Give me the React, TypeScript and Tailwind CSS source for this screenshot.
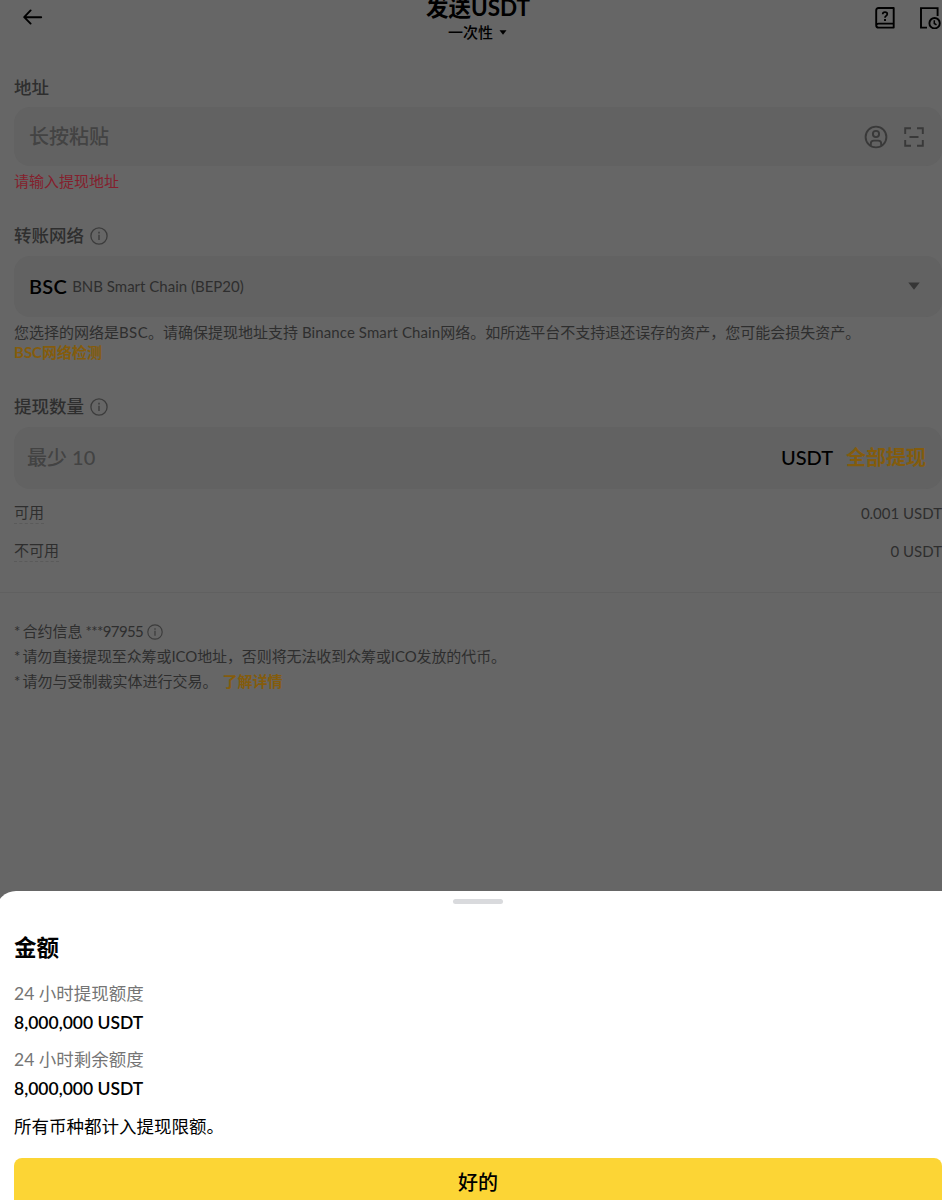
import type { ReactNode } from "react";

const InfoIcon = ({ className = "" }: { className?: string }) => (
  <svg viewBox="0 0 18 18" fill="none" stroke="#3c3c3c" className={className}>
    <circle cx="9" cy="9" r="8.1" strokeWidth="1.3" />
    <path d="M9 7.7v5.4" strokeWidth="1.4" />
    <path d="M9 4.8v1.6" strokeWidth="1.5" />
  </svg>
);

const Label = ({ children }: { children: ReactNode }) => (
  <div className="flex h-5 items-center gap-1.5 text-[17.5px] leading-5 font-medium text-[#2e2e2e]">
    {children}
  </div>
);

const Header = () => (
  <header className="grid h-[60px] grid-cols-3 items-start">
    <svg viewBox="0 0 20 16" fill="none" stroke="#000" strokeWidth="1.9" strokeLinecap="round" strokeLinejoin="round" className="mt-[9px] ml-[23px] h-4 w-5">
      <path d="M18.2 8.2H1.5M7.6 1.4 1.2 8.2l6.4 6.4" />
    </svg>

    <div className="-mt-[9px] ml-[14px] flex flex-col items-center">
      <h1 className="h-[33px] text-[22.5px] leading-[33px] font-bold whitespace-nowrap text-black">
        发送USDT
      </h1>
      <button className="-ml-px flex h-4 items-center gap-1.5 text-[15px] leading-4 font-medium text-black">
        <span>一次性</span>
        <svg viewBox="0 0 8 5" className="h-[5px] w-2">
          <path d="M.5.3h7L4 4.7z" />
        </svg>
      </button>
    </div>

    <div className="mt-[7px] flex justify-end gap-6">
      {/* help book */}
      <svg viewBox="0 0 20 22" fill="none" stroke="#000" strokeWidth="1.9" className="h-[22px] w-5">
        <path d="M18.7 1H3.6Q1.2 1 1.2 3.4v14.8Q1.2 20.6 3.6 20.6h15.1zM1.4 18.2Q1.6 16.6 3.6 16.6h15" strokeLinejoin="round" />
        <path d="M7.7 7.2q0-2.1 2.3-2.1t2.3 2q0 1.2-1.3 1.8-1 .5-1 1.8" strokeWidth="1.7" />
        <path d="M10 12v1.9" />
      </svg>
      {/* history */}
      <svg viewBox="0 0 23 22" fill="none" stroke="#000" strokeWidth="1.9" className="h-[22px] w-[23px]">
        <path d="M8 20.6H2V1.1h16.6v8" />
        <circle cx="15.6" cy="16.2" r="5.2" />
        <path d="M15.3 13.3v3.2l2.2 1.4" strokeWidth="1.5" />
      </svg>
    </div>
  </header>
);

const AmountRow = ({ label, value }: { label: string; value: string }) => (
  <div className="flex h-[21px] items-start justify-between text-[15px] leading-[18px]">
    <span className="h-[21px] border-b border-dashed border-[#5a5a5a]">{label}</span>
    <span className="pt-px">{value}</span>
  </div>
);

const LimitItem = ({ label, value }: { label: string; value: string }) => (
  <div className="text-[17.5px]">
    <p className="h-[29px] leading-[27px] text-[#757575]">{label}</p>
    <p className="h-[29px] leading-[27px] font-semibold text-black">{value}</p>
  </div>
);

const WithdrawForm = () => (
  <main className="pt-[18px] text-[#2e2e2e]">
    <div className="ml-3.5">
      <Label>地址</Label>
      <div className="mt-[9px] flex h-[59px] items-center justify-between rounded-2xl bg-[#626262] pr-[18px] pl-[15px]">
        <span className="pb-0.5 text-[20px] font-medium text-[#434343]">长按粘贴</span>
        <div className="flex items-center gap-4">
          <svg viewBox="0 0 24 24" fill="none" stroke="#393939" strokeWidth="1.9" className="size-6">
            <circle cx="12" cy="12" r="10.4" />
            <circle cx="12" cy="9" r="3.1" />
            <path d="M6.8 20.2v-1.5q0-3.1 3.1-3.1h4.2q3.1 0 3.1 3.1v1.5" />
          </svg>
          <svg viewBox="0 0 20 20" fill="none" stroke="#393939" strokeWidth="1.9" className="size-5">
            <path d="M1.2 7V1.2H7M13 1.2h5.8V7M18.8 13v5.8H13M7 18.8H1.2V13M5.5 10h9" />
          </svg>
        </div>
      </div>
      <p className="mt-1.5 h-5 text-[15px] leading-[18px] text-[#841f2d]">请输入提现地址</p>

      <div className="mt-[34px] mb-2.5">
        <Label>
          转账网络
          <InfoIcon className="size-[18px]" />
        </Label>
      </div>
      <div className="flex h-[61px] items-center rounded-2xl bg-[#626262] pr-[22px] pb-px pl-[15px]">
        <span className="text-[20px] font-semibold tracking-[0.3px] text-black">BSC</span>
        <span className="ml-[5px] text-[15px]">BNB Smart Chain (BEP20)</span>
        <svg viewBox="0 0 12 8" fill="#363636" className="ml-auto h-2 w-3">
          <path d="M.3.5h11.4L6 7.7z" />
        </svg>
      </div>
      <p className="mt-[5px] text-[15px] leading-5 whitespace-nowrap">
        您选择的网络是<span className="tracking-[0.4px]">BSC</span>。请确保提现地址支持{" "}
        <span className="tracking-[0.1px]">Binance Smart Chain</span>网络。如所选平台不支持退还误存的资产，您可能会损失资产。
        <br />
        <a className="font-bold text-[#845c0c]">BSC网络检测</a>
      </p>

      <div className="mt-[35px] mb-2.5">
        <Label>
          提现数量
          <InfoIcon className="size-[18px]" />
        </Label>
      </div>
      <div className="flex h-[62px] items-center rounded-2xl bg-[#626262] pr-4 pb-0.5 pl-[13px] text-[20px] font-medium">
        <span className="text-[#434343]">最少 10</span>
        <span className="ml-auto text-black">USDT</span>
        <button className="ml-[13px] font-semibold text-[#845c0c]">全部提现</button>
      </div>

      <div className="mt-3.5 flex flex-col gap-[17px]">
        <AmountRow label="可用" value="0.001 USDT" />
        <AmountRow label="不可用" value="0 USDT" />
      </div>
    </div>

    <hr className="mt-[30px] border-[#606060]" />

    <ul className="mt-[26px] ml-3.5 text-[15px] leading-[25px] whitespace-nowrap">
      <li className="flex h-[25px] items-center">
        <span>*</span>
        <span className="ml-0.5">合约信息</span>
        <span className="ml-[3px] -tracking-[0.6px]">***97955</span>
        <InfoIcon className="ml-1 size-4" />
      </li>
      <li className="h-[25px] -tracking-[0.1px]">
        <span className="-tracking-[0.9px]">* </span>请勿直接提现至众筹或ICO地址，否则将无法收到众筹或ICO发放的代币。
      </li>
      <li className="h-[25px]">
        <span className="-tracking-[0.9px]">* </span>请勿与受制裁实体进行交易。
        <a className="ml-[5px] font-bold text-[#845c0c]">了解详情</a>
      </li>
    </ul>
  </main>
);

const LimitSheet = () => (
  <section className="absolute -right-8 bottom-0 -left-1 h-[309px] rounded-t-[20px] bg-white pr-8 pl-[18px]">
    <div className="flex justify-center pt-2">
      <div className="mr-px h-[5px] w-[50px] rounded-full bg-[#d9dadd]" />
    </div>
    <h2 className="mt-7 h-8 text-[22.5px] leading-[31px] font-bold text-black">金额</h2>
    <div className="mt-4 flex flex-col gap-2">
      <LimitItem label="24 小时提现额度" value="8,000,000 USDT" />
      <LimitItem label="24 小时剩余额度" value="8,000,000 USDT" />
    </div>
    <p className="mt-2 h-[30px] text-[17.5px] leading-[30px] text-black">所有币种都计入提现限额。</p>
    <button className="mt-4 block h-[60px] w-full rounded-lg bg-[#fcd535] pb-3 text-[20px] font-medium text-black">
      好的
    </button>
  </section>
);

export default function App() {
  return (
    <div className="relative h-[1200px] w-[942px] overflow-hidden bg-[#666666] font-[Lato,'Noto_Sans_CJK_SC',sans-serif]">
      <Header />
      <WithdrawForm />
      <LimitSheet />
    </div>
  );
}
